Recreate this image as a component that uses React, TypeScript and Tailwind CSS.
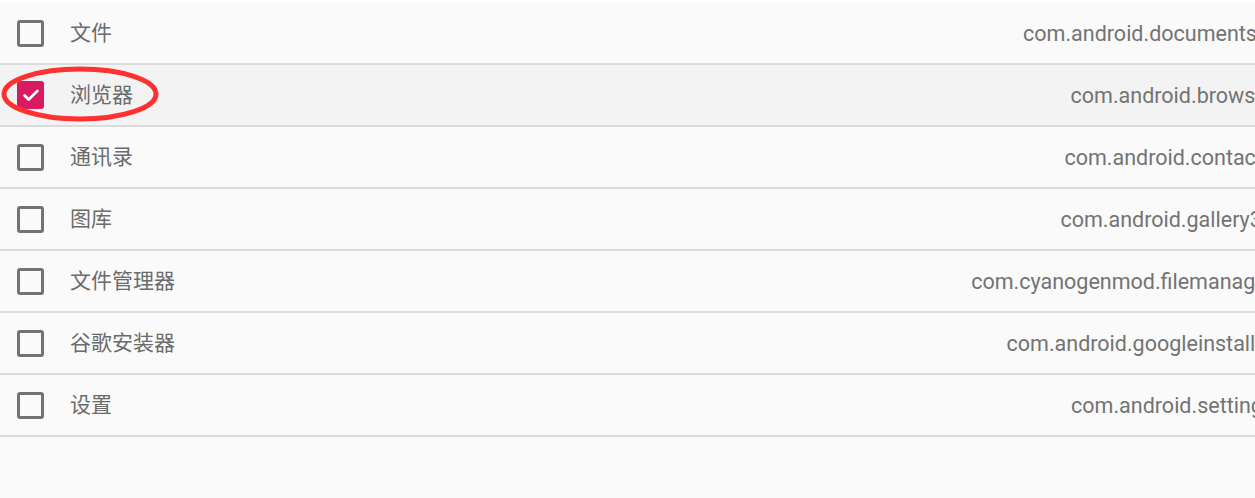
import React from 'react';

type App = { label: string; pkg: string; checked?: boolean };

const apps: App[] = [
  { label: '文件', pkg: 'com.android.documentsui' },
  { label: '浏览器', pkg: 'com.android.browser', checked: true },
  { label: '通讯录', pkg: 'com.android.contacts' },
  { label: '图库', pkg: 'com.android.gallery3d' },
  { label: '文件管理器', pkg: 'com.cyanogenmod.filemanager' },
  { label: '谷歌安装器', pkg: 'com.android.googleinstaller' },
  { label: '设置', pkg: 'com.android.settings' },
];

const Check = ({ checked }: { checked?: boolean }) =>
  checked ? (
    <div className="w-[27px] h-[28px] rounded-[3px] bg-[#d81b60] flex items-center justify-center">
      <svg viewBox="0 0 24 24" className="w-[22px] h-[22px]" fill="none" stroke="white" strokeWidth={3} strokeLinecap="round" strokeLinejoin="round">
        <path d="M5 12.5l4.5 4.5L19 7.5" />
      </svg>
    </div>
  ) : (
    <div className="w-[27px] h-[27px] rounded-[3px] border-[3px] border-[#737373]" />
  );

export default function App() {
  return (
    <div className="relative w-full h-[498px] overflow-hidden bg-[#fafafa] pt-[3px]">
      <div className="absolute top-0 left-0 right-0 h-[3px] bg-white" />
      <div className="w-[1274px]">
        {apps.map((a) => (
          <div
            key={a.pkg}
            className={`flex items-center h-[62px] pt-[2px] border-b-2 border-[#dcdcdc] ${a.checked ? 'bg-[#f3f3f3]' : ''}`}
          >
            <div className="w-[70px] pl-[17px] -mt-[2px]">
              <Check checked={a.checked} />
            </div>
            <span className="text-[21px] text-[#6b6b6b] font-['Roboto','Noto_Sans_CJK_SC',sans-serif]">{a.label}</span>
            <span className="ml-auto text-[21.5px] text-[#737373] font-['Roboto',sans-serif] whitespace-nowrap">{a.pkg}</span>
          </div>
        ))}
      </div>
      <svg className="absolute left-0 top-[64px] pointer-events-none" width="162" height="60" viewBox="0 0 162 60">
        <ellipse cx="80" cy="30" rx="76" ry="25" fill="none" stroke="#ff3030" strokeWidth="5" />
      </svg>
    </div>
  );
}
